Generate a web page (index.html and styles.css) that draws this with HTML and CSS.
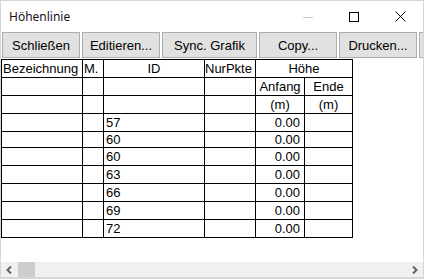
FILE: index.html
```html
<!DOCTYPE html>
<html lang="de">
<head>
    <meta charset="UTF-8">
    <meta name="viewport" content="width=device-width, initial-scale=1.0">
    <title>Höhenlinie</title>
    <link rel="stylesheet" href="styles.css">
</head>
<body>
    <div class="window">
        <div class="titlebar">
            <span class="title">Höhenlinie</span>
            <span class="caption-btn">
                <svg width="10" height="10" viewBox="0 0 10 10"><line x1="0" y1="5.5" x2="10" y2="5.5" stroke="#c8c8c8" stroke-width="1"/></svg>
            </span>
            <span class="caption-btn">
                <svg width="10" height="10" viewBox="0 0 10 10"><rect x="0.5" y="0.5" width="9" height="9" fill="none" stroke="#000" stroke-width="1"/></svg>
            </span>
            <span class="caption-btn">
                <svg width="11" height="11" viewBox="0 0 11 11"><path d="M0.5 0.5 L10.5 10.5 M10.5 0.5 L0.5 10.5" stroke="#000" stroke-width="1"/></svg>
            </span>
        </div>

        <div class="toolbar">
            <button class="tool-btn">Schließen</button>
            <button class="tool-btn">Editieren...</button>
            <button class="tool-btn wide">Sync. Grafik</button>
            <button class="tool-btn">Copy...</button>
            <button class="tool-btn">Drucken...</button>
            <button class="tool-btn">&nbsp;</button>
        </div>

        <div class="grid">
            <!-- Kopfzeilen -->
            <div>Bezeichnung</div>
            <div>M.</div>
            <div class="c">ID</div>
            <div class="tight">NurPkte</div>
            <div class="c span2">Höhe</div>

            <div></div><div></div><div></div><div></div>
            <div class="c">Anfang</div>
            <div class="c">Ende</div>

            <div></div><div></div><div></div><div></div>
            <div class="c">(m)</div>
            <div class="c">(m)</div>

            <!-- Daten -->
            <div></div><div></div><div class="id">57</div><div></div><div class="r">0.00</div><div></div>
            <div class="short"></div><div class="short"></div><div class="id short">60</div><div class="short"></div><div class="r short">0.00</div><div class="short"></div>
            <div></div><div></div><div class="id">60</div><div></div><div class="r">0.00</div><div></div>
            <div></div><div></div><div class="id">63</div><div></div><div class="r">0.00</div><div></div>
            <div></div><div></div><div class="id">66</div><div></div><div class="r">0.00</div><div></div>
            <div></div><div></div><div class="id">69</div><div></div><div class="r">0.00</div><div></div>
            <div></div><div></div><div class="id">72</div><div></div><div class="r">0.00</div><div></div>
        </div>

        <div class="spacer"></div>

        <div class="hscroll">
            <span class="arrow">
                <svg width="7" height="8" viewBox="0 0 7 8"><polyline points="5,0.5 1.5,4 5,7.5" fill="none" stroke="#606060" stroke-width="2"/></svg>
            </span>
            <span class="thumb"></span>
            <span class="track"></span>
            <span class="arrow">
                <svg width="7" height="8" viewBox="0 0 7 8"><polyline points="2,0.5 5.5,4 2,7.5" fill="none" stroke="#606060" stroke-width="2"/></svg>
            </span>
        </div>
    </div>
</body>
</html>
```

FILE: styles.css
```css
* {
    margin: 0;
    padding: 0;
    box-sizing: border-box;
}

body {
    background: #fff;
    font-family: "Liberation Sans", Arial, sans-serif;
    font-size: 13px;
    color: #000;
}

.window {
    width: 424px;
    height: 279px;
    display: flex;
    flex-direction: column;
    border: 1px solid #d6d6d6;
    border-bottom: 2px solid #d6d6d6;
    overflow: hidden;
}

.titlebar {
    height: 31px;
    display: flex;
    align-items: center;
    flex-shrink: 0;
}

.title {
    flex: 1;
    padding-left: 8px;
    font-family: "Noto Sans", "Open Sans", sans-serif;
    font-size: 12px;
    color: #1a1020;
}

.caption-btn {
    width: 46px;
    height: 31px;
    display: flex;
    align-items: center;
    justify-content: center;
}

.toolbar {
    display: flex;
    gap: 2px;
    padding-left: 1px;
    height: 26px;
    flex-shrink: 0;
}

.tool-btn {
    width: 78px;
    height: 26px;
    flex-shrink: 0;
    background: #e1e1e1;
    border: 1px solid #adadad;
    font-family: "Liberation Sans", Arial, sans-serif;
    font-size: 13px;
    color: #000;
}

.tool-btn.wide {
    width: 95px;
}

.grid {
    margin-top: 1px;
    display: grid;
    grid-template-columns: 81px 21px 101px 51px 49px 48px;
    grid-template-rows: 18px 18px 18px 18px 16px 18px 18px 18px 18px 18px;
    width: 352px;
    border-left: 1px solid #000;
    border-top: 1px solid #000;
    flex-shrink: 0;
}

.grid > div {
    border-right: 1px solid #000;
    border-bottom: 1px solid #000;
    line-height: 17px;
    padding-left: 1px;
    white-space: nowrap;
}

.grid > div.short {
    line-height: 15px;
}

.grid > div.c {
    text-align: center;
    padding-left: 0;
}

.grid > div.r {
    text-align: right;
    padding-right: 4px;
}

.grid > div.id {
    padding-left: 2px;
}

.grid > div.tight {
    padding-left: 0;
}

.span2 {
    grid-column: span 2;
}

.spacer {
    flex: 1;
}

.hscroll {
    height: 15px;
    display: flex;
    align-items: stretch;
    background: #f0f0f0;
    flex-shrink: 0;
}

.arrow {
    width: 17px;
    display: flex;
    align-items: center;
    justify-content: center;
}

.thumb {
    width: 17px;
    background: #cdcdcd;
}

.track {
    flex: 1;
}
```
